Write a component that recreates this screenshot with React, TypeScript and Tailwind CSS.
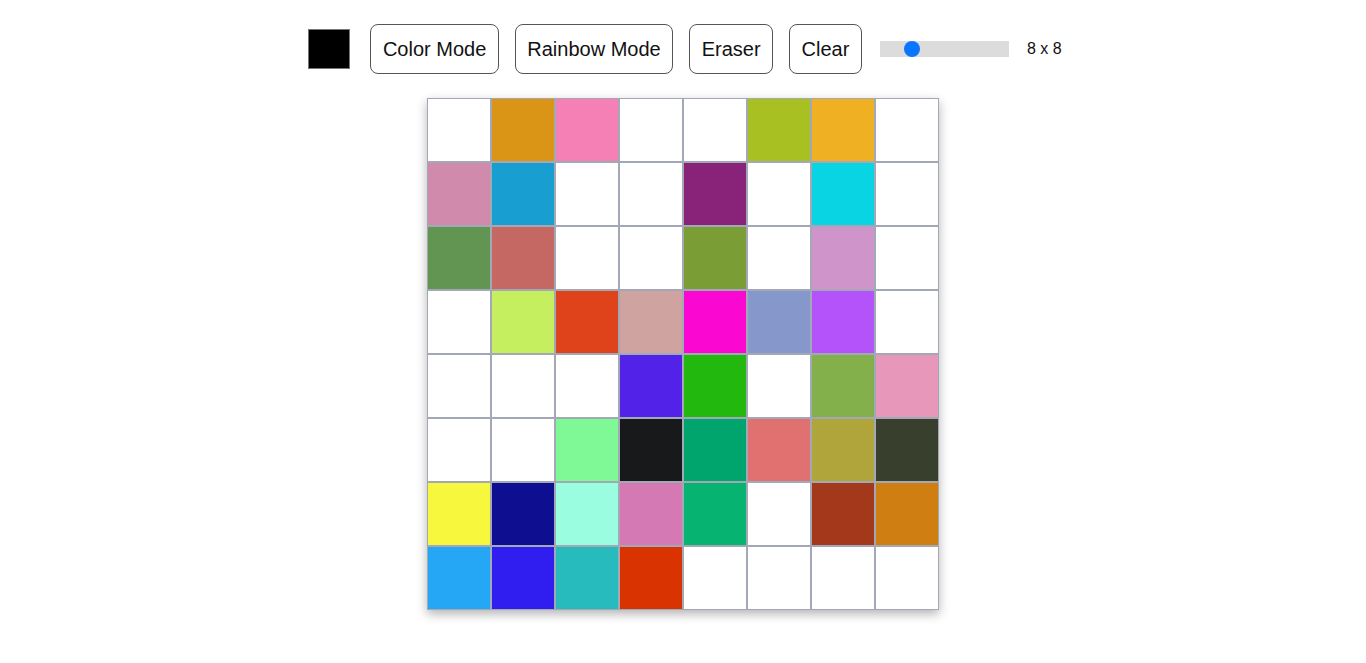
import React from 'react';

const W = '#ffffff';

// cell colours, row by row
const cells: string[][] = [
  [W, '#da9416', '#f580b5', W, W, '#a9c022', '#efb023', W],
  ['#d08aac', '#189ed0', W, W, '#892379', W, '#09d4e4', W],
  ['#629552', '#c56762', W, W, '#7b9d36', W, '#cf94ca', W],
  [W, '#c5ef5e', '#df431c', '#cfa39f', '#fa07d2', '#8697cc', '#b553fa', W],
  [W, W, W, '#5222e8', '#22b80e', W, '#83b04b', '#e797ba'],
  [W, W, '#7ff996', '#18191b', '#00a56d', '#e07170', '#afa53a', '#383f2d'],
  ['#f7f73d', '#0e0e91', '#9afde0', '#d479b4', '#07b371', W, '#a3381a', '#cf7e12'],
  ['#25a7f6', '#2f1eef', '#28bbbe', '#d83301', W, W, W, W],
];

function ToolButton({ label }: { label: string }) {
  return (
    <button className="h-[50px] px-[11.5px] rounded-lg border border-[#555] bg-white text-[20px] text-[#111]">
      {label}
    </button>
  );
}

export default function App() {
  return (
    <div className="min-h-screen bg-white font-['Liberation_Sans',Arial,sans-serif]">
      {/* Toolbar */}
      <div className="flex items-center justify-center pt-6 pl-1">
        <div className="w-[42px] h-[40px] bg-black border border-[#777] mr-5" />
        <div className="flex items-center gap-4">
          <ToolButton label="Color Mode" />
          <ToolButton label="Rainbow Mode" />
          <ToolButton label="Eraser" />
          <ToolButton label="Clear" />
        </div>
        {/* Size slider */}
        <div className="relative ml-[18px] w-[129px] h-4 bg-[#dcdcdc]">
          <div className="absolute top-0 left-[24px] w-4 h-4 rounded-full bg-[#0a75ff]" />
        </div>
        <span className="ml-[18px] text-base text-[#111]">8 x 8</span>
      </div>

      {/* Sketch grid */}
      <div className="flex justify-center mt-6">
        <div className="grid grid-cols-8 w-[512px] h-[512px] shadow-[0_4px_10px_rgba(0,0,0,0.3)]">
          {cells.flat().map((c, i) => (
            <div
              key={i}
              className="w-16 h-16 border border-[#a2a8b6]"
              style={{ backgroundColor: c }}
            />
          ))}
        </div>
      </div>
    </div>
  );
}
